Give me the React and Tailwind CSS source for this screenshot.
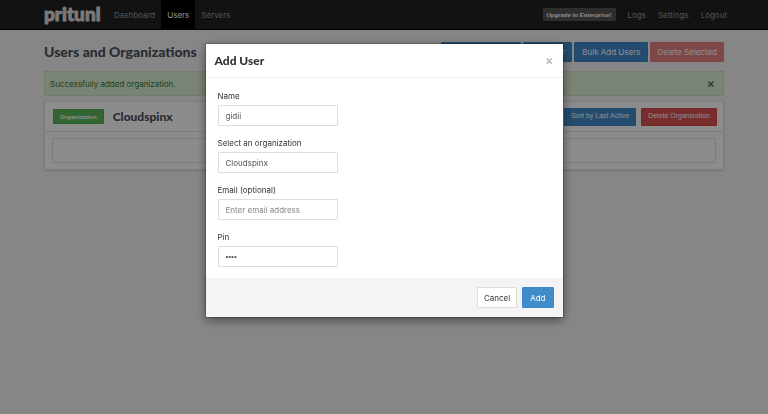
import React, { useState } from 'react';

const HEADING = "font-['Lato',sans-serif] font-black";
const SMALL = "font-['Liberation_Sans',sans-serif] text-[7px]";
const TINY = "font-['Liberation_Sans',sans-serif] text-[6px] leading-none font-bold";

const NavLink = ({ active, children }) => (
    <a
        href="#"
        className={`flex items-center px-[6px] ${active ? 'bg-black text-white' : 'text-[#999]'}`}
    >
        {children}
    </a>
);

const Button = ({ className, children, ...props }) => (
    <button type="button" className={`rounded-[1px] border whitespace-nowrap ${className}`} {...props}>
        {children}
    </button>
);

const Field = ({ id, label, children }) => (
    <div className="mb-[11px] flex flex-col items-start">
        <label htmlFor={id} className="mb-[2px] leading-[13px] text-[#333]">{label}</label>
        {children}
    </div>
);

const INPUT =
    'h-[21px] w-[120px] appearance-none rounded-[1px] border border-[#ddd] bg-white px-[7px] text-[#555] placeholder:text-[#888] outline-none';

const BLUE = 'border-[#3a87cd] bg-[#428bca] text-white';

const Logo = () => (
    <svg viewBox="0 0 56 28" className="h-[28px] w-[56px] overflow-visible" role="img" aria-label="pritunl">
        <text
            x="0"
            y="20"
            className="fill-[#ddd] stroke-[#ddd] stroke-1 font-['Lato',sans-serif] text-[19px] font-black"
            strokeLinejoin="round"
        >
            pritunl
        </text>
    </svg>
);

function Navbar() {
    return (
        <nav className="flex h-[30px] items-stretch border-b border-[#080808] bg-[#222] pr-[35px] pl-11">
            <a href="#" className="mr-[8px] flex items-center">
                <Logo />
            </a>
            <NavLink>Dashboard</NavLink>
            <NavLink active>Users</NavLink>
            <NavLink>Servers</NavLink>
            <div className="ml-auto flex items-stretch">
                <button
                    type="button"
                    className={`mr-[6px] h-[13px] self-center rounded-[1px] bg-[#555] px-[4px] text-white ${TINY}`}
                >
                    Upgrade to Enterprise!
                </button>
                <NavLink>Logs</NavLink>
                <NavLink>Settings</NavLink>
                <NavLink>Logout</NavLink>
            </div>
        </nav>
    );
}

function UsersPage() {
    return (
        <main className="px-11 pt-[12px]">
            <div className="flex items-center justify-between">
                <h2 className={`${HEADING} text-[14px] leading-[20px] text-[#4c4f5f]`}>
                    Users and Organizations
                </h2>
                <div className="flex gap-[2px]">
                    <Button className={`h-[20px] px-[6px] ${BLUE}`}>Add Organization</Button>
                    <Button className={`h-[20px] px-[6px] ${BLUE}`}>Add User</Button>
                    <Button className={`h-[20px] px-[7px] ${BLUE}`}>Bulk Add Users</Button>
                    <Button className="h-[20px] border-[#e48481] bg-[#e48481] px-[6px] text-white">
                        Delete Selected
                    </Button>
                </div>
            </div>

            <div
                role="status"
                className="mt-[9px] flex h-[25px] items-center justify-between border border-[#cfe6c0] bg-[#dff0d8] pr-[8px] pl-[5px] text-[#2f7a31]"
            >
                <span>Successfully added organization.</span>
                <button type="button" aria-label="Dismiss" className="text-[12px] leading-none font-bold text-[#5c7f5d]">
                    ×
                </button>
            </div>

            <section className="mt-[5px] border border-[#e2e2e2] bg-white shadow-sm">
                <header className="flex h-[30px] items-center border-b border-[#e2e2e2] pr-[6px] pl-[8px]">
                    <Button className={`h-[15px] border-[#4cae4c] bg-[#5cb85c] px-[6px] text-white ${TINY}`}>
                        Organization
                    </Button>
                    <h3 className={`${HEADING} ml-[9px] text-[12px] text-[#4c4f5f]`}>Cloudspinx</h3>
                    <div className="ml-auto flex gap-[5px]">
                        <Button className={`h-[18px] px-[6px] ${SMALL} ${BLUE}`}>Sort by Last Active</Button>
                        <Button className={`h-[18px] border-[#d9433f] bg-[#d9534f] px-[6px] text-white ${SMALL}`}>
                            Delete Organization
                        </Button>
                    </div>
                </header>
                <div className="px-[7px] py-[6px]">
                    <div className="h-[25px] rounded-[1px] border border-[#e2e2e2]" />
                </div>
            </section>
        </main>
    );
}

function AddUserDialog() {
    const [name, setName] = useState('gidii');
    const [email, setEmail] = useState('');
    const [pin, setPin] = useState('1234');

    return (
        <div className="fixed inset-0 flex items-start justify-center overflow-auto bg-black/45 pt-11">
            <form
                role="dialog"
                aria-labelledby="add-user-title"
                className="w-[357px] bg-white shadow-[0_3px_10px_rgba(0,0,0,0.5)] outline outline-black/20"
                onSubmit={(e) => e.preventDefault()}
            >
                <header className="flex h-[34px] items-center justify-between border-b border-[#eee] px-[9px]">
                    <h4 id="add-user-title" className={`${HEADING} text-[12px] text-[#333]`}>Add User</h4>
                    <button type="button" aria-label="Close" className="text-[12px] leading-none font-bold text-[#bbb]">
                        ×
                    </button>
                </header>

                <div className="px-[12px] pt-[12px]">
                    <Field id="name" label="Name">
                        <input id="name" className={INPUT} value={name} onChange={(e) => setName(e.target.value)} />
                    </Field>
                    <Field id="organization" label="Select an organization">
                        <select id="organization" className={INPUT}>
                            <option>Cloudspinx</option>
                        </select>
                    </Field>
                    <Field id="email" label="Email (optional)">
                        <input
                            id="email"
                            type="email"
                            placeholder="Enter email address"
                            className={INPUT}
                            value={email}
                            onChange={(e) => setEmail(e.target.value)}
                        />
                    </Field>
                    <Field id="pin" label="Pin">
                        <input
                            id="pin"
                            type="password"
                            className={`${INPUT} font-['Liberation_Sans',sans-serif]`}
                            value={pin}
                            onChange={(e) => setPin(e.target.value)}
                        />
                    </Field>
                </div>

                <footer className="flex justify-end gap-[5px] bg-[#f4f4f4] p-[9px]">
                    <Button className="h-[21px] border-[#ddd] bg-white px-[6px] text-[#333]">Cancel</Button>
                    <Button type="submit" className={`h-[21px] px-[7px] ${BLUE}`}>Add</Button>
                </footer>
            </form>
        </div>
    );
}

export default function App() {
    return (
        <div className="min-h-screen bg-[#f5f5f5] font-['Inter','Liberation_Sans',sans-serif] text-[8px]">
            <Navbar />
            <UsersPage />
            <AddUserDialog />
        </div>
    );
}
